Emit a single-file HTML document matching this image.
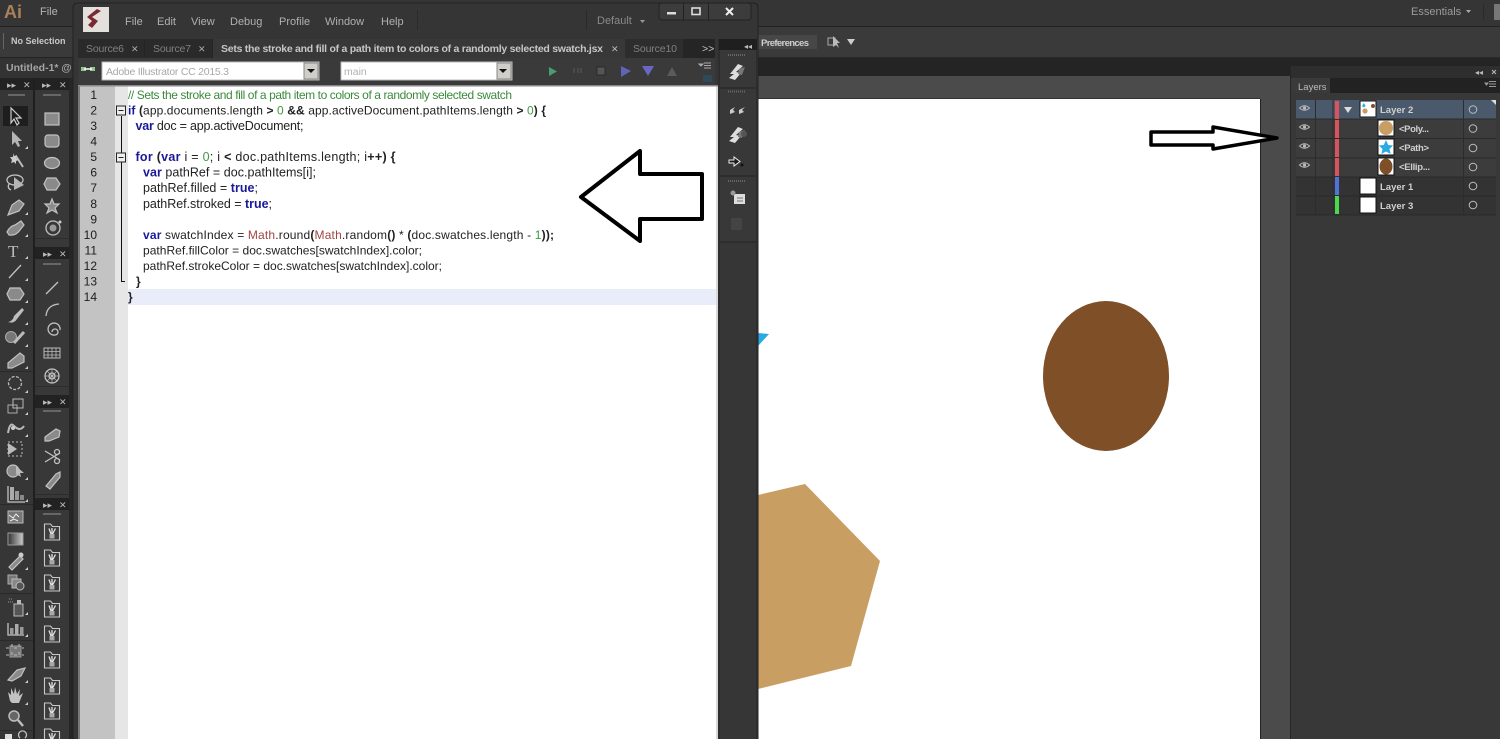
<!DOCTYPE html>
<html><head><meta charset="utf-8"><title>ExtendScript Toolkit over Illustrator</title>
<style>
html,body{margin:0;padding:0;background:#333;overflow:hidden;width:1500px;height:739px}
svg{display:block;filter:blur(.3px)}
text{font-family:"Liberation Sans",sans-serif}
.c{font-size:12px;fill:#222}
.w{font-size:12.5px}
.b{font-weight:bold}
.k{font-weight:bold;fill:#1a1a98}
.n{fill:#3f9a3f}
.m{fill:#a04545}
.ln{font-size:12px;fill:#1c1c1c}
.t{font-size:11px;fill:#a9a9a9}
.tb{font-size:10px;fill:#c8c8c8;font-weight:bold}
.i{fill:#8a8a8a;stroke:#c2c2c2;stroke-width:1.2}
.l{fill:none;stroke:#c2c2c2;stroke-width:1.3}
.f{fill:#c8c8c8}
.hd{font-size:9px;fill:#bbb}
</style></head><body>
<svg width="1500" height="739" viewBox="0 0 1500 739" xmlns="http://www.w3.org/2000/svg">
<defs>
<g id="fold"><path d="M-7.5,-8 H-1.5 L0.5,-5.5 H7.5 V8 H-7.5 Z" fill="#3d3d3d" stroke="#c8c8c8" stroke-width="1.1"/><path d="M-3,-3.5 L-1,2 M3.5,-3.5 L0.5,2 M0,-4 V2" stroke="#e2e2e2" stroke-width="1.3" fill="none"/><rect x="-2.5" y="2" width="5" height="4.5" fill="#a8a8a8"/></g>
<path id="mk" d="M3,0 V3 H0 Z" fill="#ccc"/>
<g id="sw"><path d="M-6,3 L2,-7 L7,-5 L0,1 L5,2 L-1,9 L-7,7 L-2,3 Z" fill="#ddd"/><path d="M3,-2 L9,-4 L6,4 L2,3 Z" fill="#777"/></g>
<g id="eye"><path d="M-5,0 Q0,-4.5 5,0 Q0,4.5 -5,0 Z" fill="none" stroke="#bbb" stroke-width="1"/><circle r="1.6" fill="#bbb"/></g>
<linearGradient id="g1"><stop offset="0" stop-color="#333"/><stop offset="1" stop-color="#ccc"/></linearGradient>
</defs>

<!-- Illustrator background -->
<rect width="1500" height="739" fill="#333"/>
<rect y="0" width="1500" height="26" fill="#353535"/>
<rect y="26" width="1500" height="1" fill="#222"/>
<rect y="27" width="1500" height="30" fill="#3a3a3a"/>
<rect y="57" width="1500" height="1" fill="#2a2a2a"/>
<rect x="758" y="58" width="742" height="18" fill="#242424"/>
<rect x="758" y="76" width="742" height="663" fill="#4b4b4b"/>
<rect x="758" y="98" width="502" height="1" fill="#333"/>
<rect x="758" y="99" width="502" height="640" fill="#fff"/>
<rect x="1260" y="99" width="1" height="640" fill="#222"/>

<!-- artwork -->
<ellipse cx="1106" cy="376" rx="63" ry="75" fill="#7f4f27"/>
<polygon points="758,495 805,484 880,561 851,666 758,689" fill="#c99e63"/>
<polygon points="758,333 769,334 758,346" fill="#29abe2"/>
<path d="M1151,132 H1213 V127 L1277,138 L1213,149 V145 H1151 Z" fill="#fff" stroke="#000" stroke-width="3.5" stroke-linejoin="round"/>

<!-- app bar left -->
<text x="4" y="18" font-size="18" font-weight="bold" fill="#a9805a">Ai</text>
<text x="40" y="15" font-size="11" fill="#b5b5b5">File</text>
<rect y="26" width="74" height="1" fill="#222"/>
<text x="11" y="44" class="tb" style="font-size:9px">No Selection</text>
<rect x="3" y="33" width="1" height="16" fill="#666"/>
<rect y="57" width="74" height="1" fill="#222"/>
<text x="6" y="71" font-size="10.5" font-weight="bold" fill="#a5a5a5">Untitled-1* @</text>

<!-- right bar -->
<text x="1411" y="15" font-size="11" fill="#9c9c9c">Essentials</text>
<path d="M1466,10 h5 l-2.5,3 z" fill="#aaa"/>
<rect x="1483" y="4" width="1" height="16" fill="#2a2a2a"/>
<rect x="1494" y="4" width="6" height="16" fill="#777"/>
<rect x="757" y="35" width="60" height="14" fill="#474747"/>
<text x="761" y="46" font-size="9.5" font-weight="bold" fill="#cfcfcf" textLength="48">Preferences</text>
<rect x="828" y="38" width="7" height="7" fill="none" stroke="#aaa"/>
<path d="M833,36 l7,7 h-3 l2,5 l-3,-3 l-3,2 Z" fill="#bbb"/>
<path d="M847,39 h8 l-4,6 z" fill="#ccc"/>

<!-- Tool panels -->
<rect x="0" y="78" width="33" height="661" fill="#363636"/>
<rect x="33" y="78" width="2" height="661" fill="#1f1f1f"/>
<rect x="35" y="78" width="34" height="661" fill="#383838"/>
<rect x="69" y="78" width="4" height="661" fill="#262626"/>
<rect x="0" y="78" width="33" height="12" fill="#222"/>
<rect x="35" y="78" width="34" height="12" fill="#222"/>
<text x="7" y="88" class="hd">▸▸</text><text x="23" y="88" class="hd">✕</text>
<text x="42" y="88" class="hd">▸▸</text><text x="59" y="88" class="hd">✕</text>
<rect x="8" y="94" width="17" height="2" fill="#666"/><rect x="43" y="94" width="18" height="2" fill="#666"/>
<rect x="3" y="106" width="25" height="20" fill="#1e1e1e"/>
<path d="M11,108 V123 L14,119 L17,125 L19,123 L16,118 H21 Z" fill="none" stroke="#ccc" stroke-width="1.2"/>
<path d="M12,131 V145 L15,142 L18,147 L20,146 L18,141 H22 Z" fill="#b5b5b5"/><use href="#mk" x="25" y="146"/>
<path d="M16,156 L23,167" stroke="#bbb" stroke-width="2"/><path d="M13,153 l1,3 3,-1 -1,3 3,2 -3,1 0,3 -2,-2 -3,1 1,-3 -2,-3 3,0 z" fill="#ccc"/>
<ellipse cx="15" cy="180" rx="8" ry="5" class="l"/><path d="M14,177 l10,8 -10,5 z" fill="#b5b5b5"/><path d="M9,184 q-2,4 2,6" class="l"/>
<path d="M8,215 L12,205 L19,200 L24,204 L19,211 Z" class="i"/><use href="#mk" x="25" y="212"/>
<path d="M7,232 Q10,226 15,225 L21,221 L24,225 L20,230 Q16,236 9,235 Z" class="i"/><use href="#mk" x="25" y="234"/>
<text x="8" y="257" font-size="17" fill="#bcbcbc" style="font-family:'Liberation Serif',serif">T</text><use href="#mk" x="25" y="256"/>
<path d="M9,278 L21,265" class="l"/><use href="#mk" x="25" y="278"/>
<polygon points="10,288 20,288 24,294 20,300 10,300 7,294" class="i"/><use href="#mk" x="25" y="300"/>
<path d="M8,322 Q13,321 14,316 L22,308 L24,310 L17,319 Q14,324 8,322 Z" fill="#bdbdbd"/><use href="#mk" x="25" y="322"/>
<circle cx="11" cy="337" r="5.5" fill="#777" stroke="#aaa"/><path d="M14,343 L24,332" stroke="#bbb" stroke-width="3"/><use href="#mk" x="25" y="344"/>
<path d="M8,363 L20,353 L24,356 L24,362 L12,368 H8 Z" class="i"/><use href="#mk" x="25" y="366"/>
<rect y="371" width="33" height="1" fill="#2a2a2a"/>
<circle cx="15" cy="383" r="6.5" fill="none" stroke="#bbb" stroke-width="1.3" stroke-dasharray="3 1.5"/><use href="#mk" x="25" y="390"/>
<rect x="8" y="405" width="9" height="8" fill="none" stroke="#aaa"/><rect x="13" y="399" width="10" height="9" fill="none" stroke="#bbb"/><use href="#mk" x="25" y="412"/>
<path d="M8,433 Q10,421 14,426 Q20,432 24,426" fill="none" stroke="#bbb" stroke-width="2"/><circle cx="13" cy="428" r="2" fill="#ccc"/><use href="#mk" x="25" y="434"/>
<path d="M8,442 H22 V456 H8 Z" fill="none" stroke="#bbb" stroke-dasharray="2 2"/><path d="M8,443 L17,449 L8,455 Z" fill="#bbb"/>
<circle cx="13" cy="471" r="6" class="i"/><path d="M16,466 l8,7 h-4 l1,4 -5,-3 z" fill="#bbb"/><use href="#mk" x="25" y="477"/>
<path d="M8,486 V502 H25" class="l"/><rect x="10" y="487" width="4" height="13" fill="#aaa"/><rect x="15" y="491" width="4" height="9" fill="#999"/><rect x="20" y="495" width="4" height="5" fill="#888"/><use href="#mk" x="25" y="499"/>
<rect y="504" width="33" height="1" fill="#2a2a2a"/>
<rect x="8" y="511" width="15" height="12" fill="#777" stroke="#bbb"/><path d="M9,515 l4,3 3,-4 3,3 M10,521 l4,-2 4,2" stroke="#eee" fill="none"/>
<rect x="8" y="533" width="15" height="12" fill="url(#g1)" stroke="#999"/>
<path d="M9,567 L20,556 L23,559 L12,570 Z" class="i"/><circle cx="21" cy="555" r="2.5" fill="#ccc"/><use href="#mk" x="25" y="567"/>
<rect x="8" y="575" width="9" height="9" fill="#777" stroke="#aaa"/><rect x="12" y="579" width="9" height="9" fill="#888" stroke="#bbb"/><circle cx="20" cy="586" r="4" fill="#555" stroke="#bbb"/>
<rect y="593" width="33" height="1" fill="#2a2a2a"/>
<rect x="14" y="604" width="9" height="12" fill="#555" stroke="#bbb"/><rect x="17" y="600" width="4" height="4" fill="#bbb"/><path d="M8,602 h5 M9,599 h4" stroke="#999" stroke-dasharray="1 1"/><use href="#mk" x="25" y="612"/>
<path d="M8,623 V635 H24" class="l"/><rect x="10" y="628" width="3.5" height="7" fill="#999"/><rect x="15" y="624" width="3.5" height="11" fill="#aaa"/><rect x="20" y="627" width="3.5" height="8" fill="#999"/><use href="#mk" x="25" y="634"/>
<rect y="640" width="33" height="1" fill="#2a2a2a"/>
<rect x="10" y="646" width="11" height="11" fill="#777" stroke="#999"/><path d="M6,648 h18 M6,655 h18 M12,644 v16 M19,644 v16" stroke="#bbb" stroke-dasharray="3 5" fill="none"/>
<path d="M8,680 L17,670 L25,668 L21,676 L12,681 Z" class="i"/><use href="#mk" x="25" y="680"/>
<path d="M10,701 L8,692 L11,695 L11,688 L14,694 L15,687 L17,694 L20,689 L19,696 L23,693 L19,703 H12 Z" fill="#c2c2c2"/><use href="#mk" x="25" y="702"/>
<circle cx="14" cy="716" r="5" fill="#666" stroke="#bbb" stroke-width="1.5"/><path d="M18,720 L23,726" stroke="#bbb" stroke-width="2.5"/>
<rect y="730" width="33" height="1" fill="#2a2a2a"/><rect x="5" y="734" width="7" height="5" fill="#ddd"/><path d="M20,738 a4,4 0 1 1 5,0" class="l"/>

<!-- second column -->
<rect x="45" y="113" width="14" height="12" class="i"/>
<rect x="45" y="135" width="14" height="12" rx="3" class="i"/>
<ellipse cx="52" cy="163" rx="7.5" ry="5.5" class="i"/>
<polygon points="47,178 56,178 60,184 56,190 47,190 44,184" class="i"/>
<polygon points="52,199 54,204 59,204 55,208 57,213 52,210 47,213 49,208 45,204 50,204" class="i"/>
<circle cx="53" cy="228" r="7" class="l"/><circle cx="53" cy="228" r="3.5" fill="#999"/><circle cx="60" cy="222" r="1.5" fill="#ccc"/>
<rect x="35" y="238" width="34" height="1" fill="#2c2c2c"/>
<rect x="35" y="247" width="34" height="12" fill="#222"/><text x="43" y="257" class="hd">▸▸</text><text x="59" y="257" class="hd">✕</text>
<rect x="43" y="263" width="18" height="2" fill="#666"/>
<path d="M46,294 L58,282" class="l"/>
<path d="M46,316 Q47,305 59,304" class="l"/>
<path d="M52,332 a3,3 0 1 1 3,3 a6,6 0 1 1 5,-5" class="l"/>
<rect x="44" y="348" width="16" height="10" fill="none" stroke="#bbb"/><path d="M44,351.5 h16 M44,355 h16 M48,348 v10 M52,348 v10 M56,348 v10" stroke="#bbb" stroke-width=".8"/>
<circle cx="52" cy="376" r="7" class="l"/><circle cx="52" cy="376" r="3" class="l"/><path d="M45,376 h14 M52,369 v14 M47,371 l10,10 M57,371 l-10,10" stroke="#bbb" stroke-width=".7"/>
<rect x="35" y="386" width="34" height="1" fill="#2c2c2c"/>
<rect x="35" y="395" width="34" height="13" fill="#222"/><text x="43" y="405" class="hd">▸▸</text><text x="59" y="405" class="hd">✕</text>
<rect x="43" y="410" width="18" height="2" fill="#666"/>
<path d="M45,437 L56,429 L60,431 L59,437 L49,441 H45 Z" class="i"/>
<path d="M45,451 L60,460 M45,462 L60,453" class="l"/><circle cx="57" cy="452" r="2.5" class="l"/><circle cx="57" cy="461" r="2.5" class="l"/>
<path d="M46,486 L56,474 L60,472 L60,477 L50,489 Z" class="i"/>
<rect x="35" y="494" width="34" height="1" fill="#2c2c2c"/>
<rect x="35" y="498" width="34" height="12" fill="#222"/><text x="43" y="508" class="hd">▸▸</text><text x="59" y="508" class="hd">✕</text>
<rect x="43" y="513" width="18" height="2" fill="#666"/>
<use href="#fold" x="52" y="532"/><use href="#fold" x="52" y="558"/><use href="#fold" x="52" y="583"/><use href="#fold" x="52" y="609"/><use href="#fold" x="52" y="634"/><use href="#fold" x="52" y="660"/><use href="#fold" x="52" y="686"/><use href="#fold" x="52" y="711"/><use href="#fold" x="52" y="737"/>

<!-- ESTK window -->
<rect x="73" y="3" width="685" height="736" rx="4" fill="#353535"/>
<path d="M73,739 V8 Q73,3 78,3 H753 Q758,3 758,8 V739" fill="none" stroke="#222"/>
<rect x="83" y="7" width="26" height="25" fill="#e4e0dc"/>
<path d="M101,11 L92,17 L98,21 L92,28 L88,25 L92,21 L87,17 L97,9 Z" fill="#7a2a33"/>
<g font-size="11" fill="#b0b0b0">
<text x="125" y="25">File</text><text x="157" y="25">Edit</text><text x="191" y="25">View</text><text x="230" y="25">Debug</text><text x="279" y="25">Profile</text><text x="325" y="25">Window</text><text x="381" y="25">Help</text>
<text x="597" y="24" fill="#8a8a8a">Default</text>
</g>
<rect x="417" y="10" width="1" height="20" fill="#2a2a2a"/><rect x="586" y="10" width="1" height="20" fill="#2a2a2a"/>
<path d="M640,20 h5 l-2.5,3 z" fill="#999"/>
<rect x="659" y="3" width="92" height="17" rx="3" fill="#3c3c3c" stroke="#222"/>
<rect x="683" y="3" width="1" height="17" fill="#222"/><rect x="708" y="3" width="1" height="17" fill="#222"/>
<rect x="667" y="12" width="9" height="2.5" fill="#ddd"/>
<rect x="692" y="8" width="8" height="6.5" fill="none" stroke="#ddd" stroke-width="1.6"/>
<path d="M726,8 l7,7 m0,-7 l-7,7" stroke="#eee" stroke-width="2"/>

<!-- tabs -->
<rect x="78" y="39" width="637" height="19" fill="#252525"/>
<rect x="78" y="39" width="66" height="19" fill="#2a2a2a"/>
<rect x="145" y="39" width="67" height="19" fill="#2a2a2a"/>
<rect x="213" y="39" width="412" height="19" fill="#383838"/>
<rect x="625" y="39" width="58" height="19" fill="#2d2d2d"/>
<g font-size="10.5">
<text x="86" y="52" fill="#808080" textLength="38">Source6</text><text x="131" y="52" fill="#aaa" font-size="9">✕</text>
<text x="153" y="52" fill="#808080" textLength="38">Source7</text><text x="198" y="52" fill="#aaa" font-size="9">✕</text>
<text x="221" y="52" fill="#c6c6c6" font-weight="bold" textLength="382">Sets the stroke and fill of a path item to colors of a randomly selected swatch.jsx</text><text x="611" y="52" fill="#bbb" font-size="9">✕</text>
<text x="633" y="52" fill="#808080" textLength="44">Source10</text>
<text x="702" y="52" fill="#ccc">&gt;&gt;</text>
</g>
<!-- toolbar -->
<rect x="78" y="58" width="637" height="27" fill="#3a3a3a"/>
<path d="M81,69 h5 M90,69 h5" stroke="#8fc98f" stroke-width="4"/><path d="M84,69 h8" stroke="#fff" stroke-width="1.5"/>
<rect x="102" y="62" width="217" height="18" fill="#fff" stroke="#bbb"/>
<text x="106" y="75" font-size="10.5" fill="#a8a8a8" textLength="123">Adobe Illustrator CC 2015.3</text>
<rect x="304" y="63" width="14" height="16" fill="#d0cec8" stroke="#888"/><path d="M307,69 h8 l-4,4 z" fill="#111"/>
<rect x="341" y="62" width="171" height="18" fill="#fff" stroke="#bbb"/>
<text x="344" y="75" font-size="10.5" fill="#b0b0b0">main</text>
<rect x="497" y="63" width="14" height="16" fill="#d0cec8" stroke="#888"/><path d="M499,69 h8 l-4,4 z" fill="#111"/>
<path d="M549,67 l8,4.5 -8,4.5 z" fill="#4b9a78"/>
<path d="M574,68 v5 M578,68 v5 M581,68 v5" stroke="#555" stroke-width="1.2"/>
<rect x="597" y="67" width="8" height="8" fill="#555" stroke="#2a2a2a"/>
<path d="M621,66 l10,5 -10,6 z" fill="#5f64b4"/>
<path d="M642,66 h12 l-6,10 z" fill="#6a66c4"/>
<path d="M667,76 h10 l-5,-9 z" fill="#5a5a5a"/>
<path d="M699,64 h4 l-2,2 z M704,63 h7 M704,65.5 h7 M704,68 h7" fill="#aaa" stroke="#aaa"/>
<rect x="703" y="75" width="9" height="7" fill="#2e4a5a"/>

<!-- editor -->
<rect x="78" y="85" width="2" height="654" fill="#777"/>
<rect x="80" y="86" width="35" height="653" fill="#c3c3c3"/>
<rect x="115" y="86" width="13" height="653" fill="#e6e6e6"/>
<rect x="128" y="86" width="588" height="653" fill="#fff"/>
<rect x="128" y="289" width="588" height="16" fill="#e8edf9"/>
<rect x="716" y="85" width="2" height="654" fill="#d8d8d8"/>
<rect x="78" y="85" width="640" height="1.5" fill="#888"/>
<g class="ln" text-anchor="end">
<text class="ln" x="97" y="99">1</text><text class="ln" x="97" y="114.5">2</text><text class="ln" x="97" y="130">3</text><text class="ln" x="97" y="145.6">4</text><text class="ln" x="97" y="161.2">5</text><text class="ln" x="97" y="176.7">6</text><text class="ln" x="97" y="192.2">7</text><text class="ln" x="97" y="207.8">8</text><text class="ln" x="97" y="223.3">9</text><text class="ln" x="97" y="238.9">10</text><text class="ln" x="97" y="254.4">11</text><text class="ln" x="97" y="270">12</text><text class="ln" x="97" y="285.5">13</text><text class="ln" x="97" y="301">14</text>
</g>
<!-- fold markers -->
<path d="M121.5,116 V281.5 H125" fill="none" stroke="#111" stroke-width="1"/>
<rect x="116.5" y="106" width="9" height="9" fill="#eee" stroke="#222"/><path d="M118.5,110.5 h5" stroke="#222"/>
<rect x="116.5" y="153" width="9" height="9" fill="#eee" stroke="#222"/><path d="M118.5,157.5 h5" stroke="#222"/>

<!-- code -->
<text class="c" x="128" y="99" textLength="384" style="fill:#3b8a3b">// Sets the stroke and fill of a path item to colors of a randomly selected swatch</text>
<text class="c" x="128" y="114.5" textLength="418"><tspan class="k">if</tspan> <tspan class="b">(</tspan>app.documents.length <tspan class="b">&gt;</tspan> <tspan class="n">0</tspan> <tspan class="b">&amp;&amp;</tspan> app.activeDocument.pathItems.length <tspan class="b">&gt;</tspan> <tspan class="n">0</tspan><tspan class="b">) {</tspan></text>
<text class="c w" x="135.5" y="130" textLength="168"><tspan class="k">var</tspan> doc = app.activeDocument;</text>
<text class="c w" x="135.5" y="161.2" textLength="260"><tspan class="k">for</tspan> <tspan class="b">(</tspan><tspan class="k">var</tspan> i = <tspan class="n">0</tspan>; i <tspan class="b">&lt;</tspan> doc.pathItems.length; i<tspan class="b">++) {</tspan></text>
<text class="c w" x="143" y="176.7" textLength="173"><tspan class="k">var</tspan> pathRef = doc.pathItems[i];</text>
<text class="c w" x="143" y="192.2" textLength="115">pathRef.filled = <tspan class="k">true</tspan>;</text>
<text class="c w" x="143" y="207.8" textLength="129">pathRef.stroked = <tspan class="k">true</tspan>;</text>
<text class="c" x="143" y="238.9" textLength="411"><tspan class="k">var</tspan> swatchIndex = <tspan class="m">Math</tspan>.round<tspan class="b">(</tspan><tspan class="m">Math</tspan>.random<tspan class="b">()</tspan> * <tspan class="b">(</tspan>doc.swatches.length - <tspan class="n">1</tspan><tspan class="b">));</tspan></text>
<text class="c" x="143" y="254.4" textLength="279">pathRef.fillColor = doc.swatches[swatchIndex].color;</text>
<text class="c" x="143" y="270" textLength="299">pathRef.strokeColor = doc.swatches[swatchIndex].color;</text>
<text class="c b" x="136" y="285.5">}</text>
<text class="c b" x="128" y="301">}</text>

<!-- big arrow -->
<path d="M581,197 L640,151 V174 H702 V219 H640 V241 Z" fill="#fff" stroke="#000" stroke-width="4" stroke-linejoin="round"/>

<!-- right dock in ESTK -->
<rect x="718" y="39" width="40" height="700" fill="#2d2d2d"/>
<rect x="719" y="39" width="38" height="11" fill="#1f1f1f"/>
<text x="744" y="49" class="hd" style="font-size:8px">◂◂</text>
<rect x="720" y="50" width="36" height="37" fill="#383838"/>
<rect x="720" y="89" width="36" height="86" fill="#383838"/>
<rect x="720" y="177" width="36" height="64" fill="#383838"/>
<rect x="720" y="243" width="36" height="496" fill="#363636"/>
<path d="M728,55 h17 M728,91.5 h17 M728,181 h17" stroke="#666" stroke-width="2" stroke-dasharray="1 1"/>
<use href="#sw" x="736" y="71"/>
<path d="M730,110 l5,-3 -2,3 2,2 -5,2 z M739,110 l6,-3 -3,3 2,2 -5,2 z" fill="#ccc"/>
<use href="#sw" x="736" y="134"/><circle cx="744" cy="134" r="3" fill="#555"/>
<path d="M729,160 h5 v-3 l6,4.5 -6,4.5 v-3 h-5 z" fill="#1a1a1a" stroke="#eee"/><circle cx="742" cy="165" r="1.5" fill="#111"/>
<rect x="734" y="194" width="11" height="10" fill="#ddd"/><circle cx="733" cy="193" r="2.5" fill="#999"/><path d="M737,198 h6 M737,201 h6" stroke="#777"/>
<rect x="731" y="218" width="11" height="12" fill="#444"/>

<!-- Layers panel -->
<rect x="1290" y="66" width="210" height="673" fill="#383838"/>
<rect x="1290" y="66" width="210" height="12" fill="#2e2e2e"/>
<rect x="1290" y="78" width="210" height="15" fill="#222"/>
<rect x="1291" y="78" width="39" height="15" fill="#3a3a3a"/>
<rect x="1290" y="66" width="1" height="673" fill="#262626"/>
<text x="1298" y="90" font-size="9.5" fill="#bdbdbd">Layers</text>
<text x="1475" y="75" class="hd" style="font-size:8px">◂◂</text>
<path d="M1492,70 l4,4 m0,-4 l-4,4" stroke="#bbb"/>
<path d="M1485,83 h3 l-1.5,2 z M1489,81.5 h7 M1489,84 h7 M1489,86.5 h7" stroke="#999" fill="#999"/>
<rect x="1296" y="100" width="200" height="19" fill="#4a596b"/>
<rect x="1296" y="119" width="200" height="59" fill="#3c3c3c"/>
<rect x="1296" y="177" width="200" height="38" fill="#333"/>
<path d="M1296,119 h200 M1296,138.5 h200 M1296,158 h200 M1296,177 h200 M1296,196 h200 M1296,215 h200" stroke="#2a2a2a"/>
<path d="M1315.5,100 V215 M1333,100 V215 M1463.5,100 V215" stroke="#2c2c2c"/>
<use href="#eye" x="1304.5" y="108"/><use href="#eye" x="1304.5" y="127"/><use href="#eye" x="1304.5" y="146"/><use href="#eye" x="1304.5" y="165"/>
<rect x="1335" y="101" width="4" height="18" fill="#d9535c"/><rect x="1335" y="120" width="4" height="18" fill="#d9535c"/><rect x="1335" y="139" width="4" height="18" fill="#d9535c"/><rect x="1335" y="158" width="4" height="18" fill="#d9535c"/>
<rect x="1335" y="177" width="4" height="18" fill="#4f74d8"/><rect x="1335" y="196" width="4" height="18" fill="#48d94c"/>
<path d="M1344,107 h8 l-4,6 z" fill="#ddd"/>
<rect x="1360" y="101" width="16" height="16" fill="#fff" stroke="#111"/>
<circle cx="1365" cy="111" r="2.6" fill="#c99e63"/><circle cx="1373" cy="106" r="2" fill="#7f4f27"/><path d="M1362,106 l1.8,-3 1.8,3 -1.8,1.5 z" fill="#29abe2"/>
<rect x="1378" y="120" width="16" height="16" fill="#fff" stroke="#111"/><circle cx="1386" cy="128" r="7" fill="#c99e63"/>
<rect x="1378" y="139" width="16" height="16" fill="#fff" stroke="#111"/><polygon points="1386,140 1388.2,145 1393,145.5 1389.5,149 1390.6,154 1386,151.5 1381.4,154 1382.5,149 1379,145.5 1383.8,145" fill="#29abe2"/>
<rect x="1378" y="158" width="16" height="17" fill="#fff" stroke="#111"/><ellipse cx="1386" cy="166.5" rx="6.5" ry="8" fill="#7f4f27"/>
<rect x="1360" y="178" width="16" height="16" fill="#fff" stroke="#111"/>
<rect x="1360" y="197" width="16" height="16" fill="#fff" stroke="#111"/>
<g font-size="9.5" font-weight="bold" fill="#d0d0d0">
<text x="1380" y="113">Layer 2</text><text x="1399" y="132" textLength="30">&lt;Poly...</text><text x="1399" y="151" textLength="30">&lt;Path&gt;</text><text x="1399" y="170" textLength="31">&lt;Ellip...</text><text x="1380" y="190">Layer 1</text><text x="1380" y="209">Layer 3</text>
</g>
<g fill="none" stroke="#bdbdbd"><circle cx="1473" cy="109.5" r="3.8"/><circle cx="1473" cy="128.5" r="3.8"/><circle cx="1473" cy="148" r="3.8"/><circle cx="1473" cy="167" r="3.8"/><circle cx="1473" cy="186" r="3.8"/><circle cx="1473" cy="205" r="3.8"/></g>
<path d="M1491,100 h5 v5 z" fill="#ddd"/>
</svg>
</body></html>
